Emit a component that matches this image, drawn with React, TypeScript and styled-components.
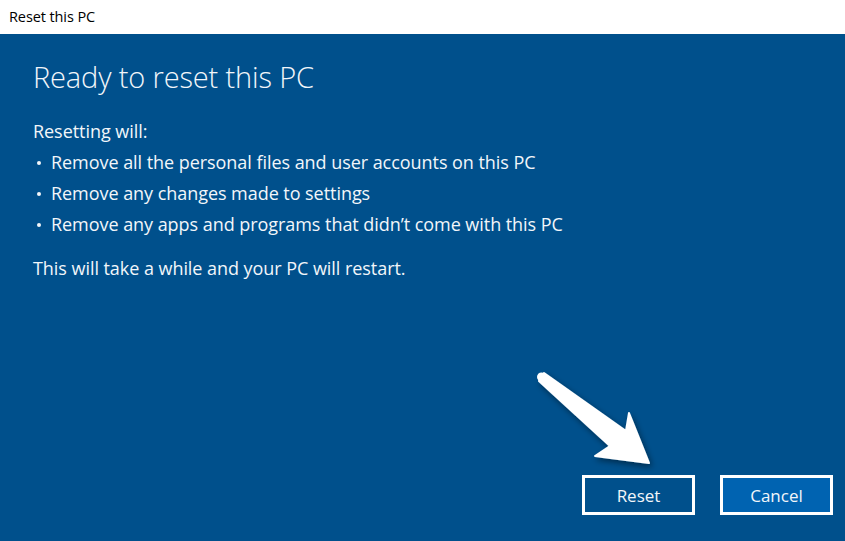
import { createGlobalStyle } from 'styled-components';
import styled from 'styled-components';

const GlobalStyle = createGlobalStyle`
  html, body {
    margin: 0;
    padding: 0;
    height: 100%;
    overflow: hidden;
  }
  #root {
    height: 100%;
  }
`;

const items = [
  'Remove all the personal files and user accounts on this PC',
  'Remove any changes made to settings',
  'Remove any apps and programs that didn\u2019t come with this PC',
];

const App = () => {
  return (
    <>
      <GlobalStyle />
      <StyledWindow>
        <TitleBar>Reset this PC</TitleBar>
        <Panel>
          <Heading>Ready to reset this PC</Heading>
          <Body>
            <Line>Resetting will:</Line>
            <BulletList>
              {items.map((item) => (
                <Bullet key={item}>{item}</Bullet>
              ))}
            </BulletList>
            <Note>This will take a while and your PC will restart.</Note>
          </Body>
          <Footer>
            <DialogButton>Reset</DialogButton>
            <DialogButton $primary>Cancel</DialogButton>
          </Footer>
          <Pointer viewBox="0 0 845 541" aria-hidden="true">
            <defs>
              <filter id="arrow-shadow" x="-20%" y="-20%" width="140%" height="140%">
                <feGaussianBlur in="SourceAlpha" stdDeviation="3" />
                <feOffset dx="2" dy="3" result="blur" />
                <feComponentTransfer>
                  <feFuncA type="linear" slope="0.45" />
                </feComponentTransfer>
                <feMerge>
                  <feMergeNode />
                  <feMergeNode in="SourceGraphic" />
                </feMerge>
              </filter>
            </defs>
            <polygon
              points="544,373 626,431 629,413 649,463 595,456 610,446 539,381"
              fill="#ffffff"
              stroke="#ffffff"
              strokeWidth="2"
              strokeLinejoin="round"
              filter="url(#arrow-shadow)"
            />
            <circle cx="541.5" cy="377" r="4.5" fill="#ffffff" />
          </Pointer>
        </Panel>
      </StyledWindow>
    </>
  );
};

const StyledWindow = styled.div`
  display: flex;
  flex-direction: column;
  width: 845px;
  height: 541px;
  font-family: 'Open Sans', 'Noto Sans', sans-serif;
`;

const TitleBar = styled.div`
  display: flex;
  align-items: center;
  height: 34px;
  padding: 0 9px 1px;
  box-sizing: border-box;
  background: #ffffff;
  color: #000000;
  font-size: 14.5px;
  letter-spacing: -0.1px;
`;

const Panel = styled.div`
  position: relative;
  flex: 1;
  display: flex;
  flex-direction: column;
  padding: 20px 12px 26px 33px;
  background: #00508c;
  color: #f2f6fa;
`;

const Heading = styled.h1`
  margin: 0;
  font-size: 29px;
  font-weight: 300;
  line-height: 46px;
  letter-spacing: -0.15px;
`;

const Body = styled.div`
  display: flex;
  flex-direction: column;
  margin-top: 16px;
  font-size: 18px;
  line-height: 31px;
  letter-spacing: -0.05px;
`;

const Line = styled.div``;

const BulletList = styled.ul`
  margin: 0;
  padding: 0;
  list-style: none;
`;

const Bullet = styled.li`
  position: relative;
  padding-left: 18px;

  &::before {
    content: '';
    position: absolute;
    left: 4px;
    top: 14px;
    width: 4px;
    height: 4px;
    border-radius: 50%;
    background: currentColor;
  }
`;

const Note = styled.div`
  margin-top: 13px;
`;

const Footer = styled.div`
  display: flex;
  justify-content: flex-end;
  gap: 25px;
  margin-top: auto;
`;

const DialogButton = styled.button<{ $primary?: boolean }>`
  width: 113px;
  height: 40px;
  border: 3px solid #ffffff;
  background: ${({ $primary }) => ($primary ? '#0063b1' : 'transparent')};
  color: #f2f6fa;
  font-family: inherit;
  font-size: 17px;
  cursor: pointer;
`;

const Pointer = styled.svg`
  position: absolute;
  left: 0;
  top: -34px;
  width: 845px;
  height: 541px;
  pointer-events: none;
`;

export default App;
